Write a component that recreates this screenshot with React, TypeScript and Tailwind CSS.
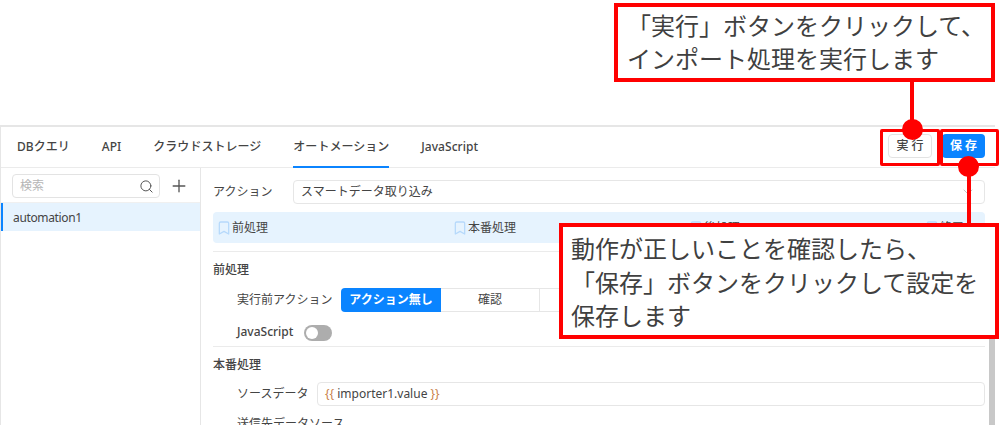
import React from "react";
import { Search, Plus, ChevronDown, Bookmark } from "lucide-react";

const tabs = ["DBクエリ", "API", "クラウドストレージ", "オートメーション", "JavaScript"];
const steps = ["前処理", "本番処理", "後処理", "終了"];

export default function App() {
  return (
    <div className="relative w-[999px] h-[425px] overflow-hidden bg-white text-[12px] leading-[18px] text-[#444444] font-['Noto_Sans','Noto_Sans_CJK_JP',sans-serif]">
      <div className="h-[125px]" />
      <div className="w-[995px] h-[300px] border-t-2 border-l border-[#e6e6e6] flex flex-col">
        <div className="h-[41px] shrink-0 border-b border-[#ebebeb] flex items-stretch justify-between pl-4 pr-[10px]">
          <div className="flex gap-8">
            {tabs.map((t, i) => (
              <div
                key={t}
                className={`h-[41px] flex items-center font-medium border-b-2 pt-px tracking-[0.03px] ${i === 3 ? "border-[#0b84ff]" : "border-transparent"}`}
              >
                {t}
              </div>
            ))}
          </div>
          <div className="flex items-center gap-[10px] pb-[3px]">
            <button className="w-[44px] h-6 rounded-[4px] border border-[#e3e3e3] bg-white tracking-[3px] pl-[3px] font-medium">実行</button>
            <button className="w-[43px] h-6 rounded-[4px] bg-[#0a84ff] text-white tracking-[3px] pl-[3px] font-bold">保存</button>
          </div>
        </div>
        <div className="flex flex-1 min-h-0">
          <aside className="w-[200px] shrink-0 border-r border-[#e6e6e6]">
            <div className="h-[35px] pl-[11px] pt-[6px] flex gap-[9px] border-b border-[#f0f0f0]">
              <div className="w-[148px] h-6 rounded-[4px] border border-[#e3e3e3] flex items-center justify-between pl-[7px] pr-[5px]">
                <span className="text-[#b5b5b5]">検索</span>
                <Search size={15} strokeWidth={1.6} className="text-[#555]" />
              </div>
              <Plus size={20} strokeWidth={1.6} className="text-[#555] mt-[2px]" />
            </div>
            <div className="h-[28px] border-l-2 border-[#0b84ff] bg-[#e6f3fe] pl-[10px] pt-[2px] flex items-center tracking-[-0.35px]">automation1</div>
          </aside>
          <main className="flex-1 min-w-0 pl-3 pr-[10px] pt-3 overflow-hidden">
            <div className="flex items-center">
              <span className="w-[80px] shrink-0">アクション</span>
              <div className="flex-1 h-6 rounded-[4px] border border-[#e6e6e6] flex items-center justify-between pl-[7px] pr-2">
                <span>スマートデータ取り込み</span>
                <ChevronDown size={16} strokeWidth={1.2} className="text-[#b5b5b5]" />
              </div>
            </div>
            <div className="mt-2 h-[31px] rounded-[4px] bg-[#e6f3fe] grid grid-cols-[236px_236px_236px_1fr] items-center pl-[3px]">
              {steps.map((s) => (
                <div key={s} className="flex items-center">
                  <Bookmark size={16} strokeWidth={1.9} className="text-[#b6d9fb]" />
                  <span>{s}</span>
                </div>
              ))}
            </div>
            <div className="mt-2 border-t border-[#ebebeb]" />
            <div className="mt-[9px] font-medium">前処理</div>
            <div className="mt-[9px] pl-6 flex items-center">
              <span className="w-[104px] shrink-0">実行前アクション</span>
              <div className="flex h-6">
                <div className="w-[100px] rounded-l-[4px] bg-[#0a84ff] text-white font-bold flex items-center justify-center">アクション無し</div>
                <div className="w-[99px] border-y border-r border-[#e6e6e6] flex items-center justify-center">確認</div>
                <div className="w-[99px] border-y border-r border-[#e6e6e6]" />
              </div>
            </div>
            <div className="mt-[10px] pl-6 flex items-center gap-[11px]">
              <span className="font-medium">JavaScript</span>
              <div className="w-[28px] h-4 rounded-full bg-[#adadad] flex items-center pl-[2px] mt-[3px]">
                <div className="w-3 h-3 rounded-full bg-white" />
              </div>
            </div>
            <div className="mt-[5px] border-t border-[#ebebeb]" />
            <div className="mt-[9px] font-medium">本番処理</div>
            <div className="mt-2 pl-6 flex items-center">
              <span className="w-[80px] shrink-0">ソースデータ</span>
              <div className="flex-1 h-6 rounded-[4px] border border-[#e6e6e6] flex items-center pl-[7px]">
                <span><span className="text-[#c9814a]">{"{{"}</span> importer1.value <span className="text-[#c9814a]">{"}}"}</span></span>
              </div>
            </div>
            <div className="mt-[9px] pl-6">送信先データソース</div>
          </main>
        </div>
      </div>

      <div className="absolute left-[989px] top-[300px] w-[6px] h-[125px] bg-[#c8c8c8]" />

      <div className="absolute left-[614px] top-[3px] w-[381px] h-[79px] border-4 border-[#ff0000] bg-white pl-[9px] pt-px text-[24px] leading-[33px] text-[#404040] whitespace-nowrap font-['Noto_Sans_CJK_JP',sans-serif]">
        <div>「実行」ボタンをクリックして、</div>
        <div>インポート処理を実行します</div>
      </div>
      <div className="absolute left-[910px] top-[82px] w-1 h-[40px] bg-[#ff0000]" />
      <div className="absolute left-[880px] top-[129px] w-[60px] h-[37px] border-[3px] border-[#ff0000] rounded-[2px]" />
      <div className="absolute left-[940px] top-[129px] w-[59px] h-[37px] border-[3px] border-[#ff0000] rounded-[2px]" />
      <div className="absolute left-[902px] top-[119px] w-[21px] h-[21px] rounded-full bg-[#ff0000]" />
      <div className="absolute left-[967px] top-[170px] w-1 h-[54px] bg-[#ff0000]" />
      <div className="absolute left-[958px] top-[156px] w-[21px] h-[21px] rounded-full bg-[#ff0000]" />
      <div className="absolute left-[559px] top-[223px] w-[440px] h-[116px] border-4 border-[#ff0000] bg-white pl-2 pt-[4px] text-[24px] leading-[33.5px] text-[#404040] whitespace-nowrap font-['Noto_Sans_CJK_JP',sans-serif]">
        <div>動作が正しいことを確認したら、</div>
        <div>「保存」ボタンをクリックして設定を</div>
        <div>保存します</div>
      </div>
    </div>
  );
}
